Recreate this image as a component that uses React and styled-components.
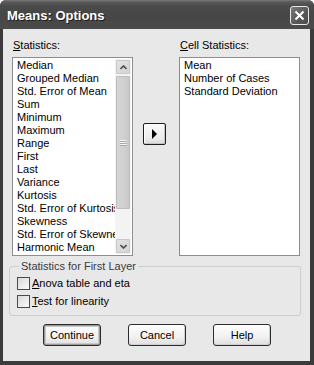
import React from "react";
import styled, { createGlobalStyle } from "styled-components";

const Global = createGlobalStyle`
  html, body { margin: 0; padding: 0; background: #ffffff; }
  body { font-family: "Liberation Sans", Arial, sans-serif; font-size: 11px; color: #000; }
  * { box-sizing: border-box; }
`;

const Window = styled.div`
  width: 314px;
  height: 365px;
  display: flex;
  flex-direction: column;
  background: #3b3b3b;
  border-radius: 6px 6px 0 0;
  overflow: hidden;
`;

const TitleBar = styled.div`
  height: 29px;
  flex: none;
  display: flex;
  align-items: center;
  justify-content: space-between;
  padding: 0 5px 0 7px;
  background: linear-gradient(#7a7a7a 0px, #5a5a5a 2px, #4a4a4a 6px, #464646 60%, #4b4b4b 100%);
`;

const Title = styled.div`
  font-family: "Liberation Sans", Arial, sans-serif;
  font-weight: bold;
  font-size: 13px;
  color: #ffffff;
  text-shadow: 1px 1px 0 #1e1e1e;
  margin-top: 1px;
`;

const CloseButton = styled.div`
  width: 19px;
  height: 19px;
  border: 1px solid #e8e8e8;
  border-radius: 3px;
  background: linear-gradient(135deg, #7a7a7a, #575757 60%, #4e4e4e);
  display: flex;
  align-items: center;
  justify-content: center;
  margin-top: 2px;
`;

const Client = styled.div`
  flex: 1;
  margin: 0 4px 4px 3px;
  background: #e8e8e8;
  padding-top: 10px;
  display: flex;
  flex-direction: column;
`;

const Top = styled.div`
  display: flex;
  align-items: flex-start;
  margin-left: 9px;
`;

const Column = styled.div`
  width: 121px;
  display: flex;
  flex-direction: column;
  margin-left: ${(p) => p.$offset || 0}px;
`;

const Label = styled.div`
  height: 13px;
  line-height: 13px;
  font-size: 11px;
  margin-bottom: 5px;
  padding-left: 1px;
  color: #000;
  white-space: nowrap;
`;

const ListBox = styled.div`
  height: 199px;
  border: 1px solid #8e8e8e;
  background: #ffffff;
  padding: 1px;
  display: flex;
  overflow: hidden;
`;

const Items = styled.div`
  flex: 1;
  min-width: 0;
  overflow: hidden;
`;

const Item = styled.div`
  height: 13px;
  line-height: 13px;
  font-size: 11px;
  padding-left: 3px;
  white-space: nowrap;
  overflow: hidden;
`;

const ScrollBar = styled.div`
  width: 16px;
  flex: none;
  display: flex;
  flex-direction: column;
  background: #f3f3f3;
`;

const ScrollBtn = styled.div`
  height: 16px;
  flex: none;
  border: 1px solid #f2f2f2;
  border-radius: 2px;
  background: linear-gradient(135deg, #e4e4e4, #d2d2d2);
  display: flex;
  align-items: center;
  justify-content: center;
  box-shadow: inset 0 0 0 1px #c9c9c9;
`;

const Thumb = styled.div`
  height: 135px;
  flex: none;
  border: 1px solid #f4f4f4;
  border-radius: 2px;
  background: linear-gradient(90deg, #d6d6d6, #cfcfcf 60%, #c6c6c6);
  box-shadow: inset 0 0 0 1px #bdbdbd;
  display: flex;
  flex-direction: column;
  align-items: center;
  justify-content: center;
  gap: 1px;
`;

const Grip = styled.div`
  width: 7px;
  height: 1px;
  background: #f4f4f4;
  box-shadow: 0 1px 0 #a9a9a9;
`;

const Track = styled.div`
  flex: 1;
`;

const MoveButton = styled.div`
  width: 23px;
  height: 22px;
  margin-left: 10px;
  margin-top: 84px;
  border: 1px solid #1e1e1e;
  border-radius: 2px;
  background: linear-gradient(#fbfbfb, #ececec 70%, #d9d9d9);
  box-shadow: inset -1px -1px 0 #c4c4c4, inset 1px 1px 0 #ffffff;
  display: flex;
  align-items: center;
  justify-content: center;
  flex: none;
`;

const Group = styled.fieldset`
  margin: 4px 9px 0 6px;
  padding: 4px 0 7px 7px;
  border: 1px solid #cdcdcd;
  border-radius: 3px;
  display: flex;
  flex-direction: column;
  gap: 5px;
  min-width: 0;
`;

const Legend = styled.legend`
  padding: 0 2px;
  margin-left: 2px;
  font-size: 11px;
  line-height: 13px;
  color: #3a3a3a;
`;

const CheckRow = styled.label`
  display: flex;
  align-items: center;
  height: 13px;
  gap: 2px;
  font-size: 11px;
  line-height: 13px;
`;

const Box = styled.span`
  width: 13px;
  height: 13px;
  flex: none;
  border: 1px solid #4a4a4a;
  background: linear-gradient(135deg, #d8d8d8, #eeeeee 60%, #fbfbfb);
`;

const Buttons = styled.div`
  display: flex;
  justify-content: center;
  gap: 27px;
  margin-top: 8px;
  padding-left: 1px;
`;

const Button = styled.div`
  width: 58px;
  height: 22px;
  border: 1px solid #2c2c2c;
  border-radius: 3px;
  background: linear-gradient(#fdfdfd, #f1f1f1 60%, #dedede);
  display: flex;
  align-items: center;
  justify-content: center;
  font-size: 11px;
  line-height: 13px;
  box-shadow: ${(p) =>
    p.$default
      ? "inset 0 0 0 1px #9a9a9a, inset 0 0 0 2px #c8c8c8"
      : "inset -1px -1px 0 #cfcfcf"};
`;

const Key = styled.span`
  text-decoration: underline;
  text-underline-offset: 1px;
`;

const leftItems = [
  "Median",
  "Grouped Median",
  "Std. Error of Mean",
  "Sum",
  "Minimum",
  "Maximum",
  "Range",
  "First",
  "Last",
  "Variance",
  "Kurtosis",
  "Std. Error of Kurtosis",
  "Skewness",
  "Std. Error of Skewness",
  "Harmonic Mean",
];

const rightItems = ["Mean", "Number of Cases", "Standard Deviation"];

const Chevron = ({ up }) => (
  <svg width="7" height="5" viewBox="0 0 7 5">
    <path
      d={up ? "M0.5 4 L3.5 1 L6.5 4" : "M0.5 1 L3.5 4 L6.5 1"}
      fill="none"
      stroke="#4d4d4d"
      strokeWidth="1.6"
    />
  </svg>
);

export default function App() {
  return (
    <>
      <Global />
      <Window>
        <TitleBar>
          <Title>Means: Options</Title>
          <CloseButton>
            <svg width="11" height="11" viewBox="0 0 11 11">
              <path d="M1.5 1.5 L9.5 9.5 M9.5 1.5 L1.5 9.5" stroke="#ffffff" strokeWidth="2" />
            </svg>
          </CloseButton>
        </TitleBar>
        <Client>
          <Top>
            <Column>
              <Label>
                <Key>S</Key>tatistics:
              </Label>
              <ListBox>
                <Items>
                  {leftItems.map((t) => (
                    <Item key={t}>{t}</Item>
                  ))}
                </Items>
                <ScrollBar>
                  <ScrollBtn>
                    <Chevron up />
                  </ScrollBtn>
                  <Thumb>
                    <Grip />
                    <Grip />
                    <Grip />
                  </Thumb>
                  <Track />
                  <ScrollBtn>
                    <Chevron />
                  </ScrollBtn>
                </ScrollBar>
              </ListBox>
            </Column>
            <MoveButton>
              <svg width="5" height="10" viewBox="0 0 5 10">
                <path d="M0 0 L5 5 L0 10 Z" fill="#000" />
              </svg>
            </MoveButton>
            <Column $offset={13}>
              <Label>
                <Key>C</Key>ell Statistics:
              </Label>
              <ListBox>
                <Items>
                  {rightItems.map((t) => (
                    <Item key={t}>{t}</Item>
                  ))}
                </Items>
              </ListBox>
            </Column>
          </Top>
          <Group>
            <Legend>Statistics for First Layer</Legend>
            <CheckRow>
              <Box />
              <span>
                <Key>A</Key>nova table and eta
              </span>
            </CheckRow>
            <CheckRow>
              <Box />
              <span>
                <Key>T</Key>est for linearity
              </span>
            </CheckRow>
          </Group>
          <Buttons>
            <Button $default>Continue</Button>
            <Button>Cancel</Button>
            <Button>Help</Button>
          </Buttons>
        </Client>
      </Window>
    </>
  );
}
